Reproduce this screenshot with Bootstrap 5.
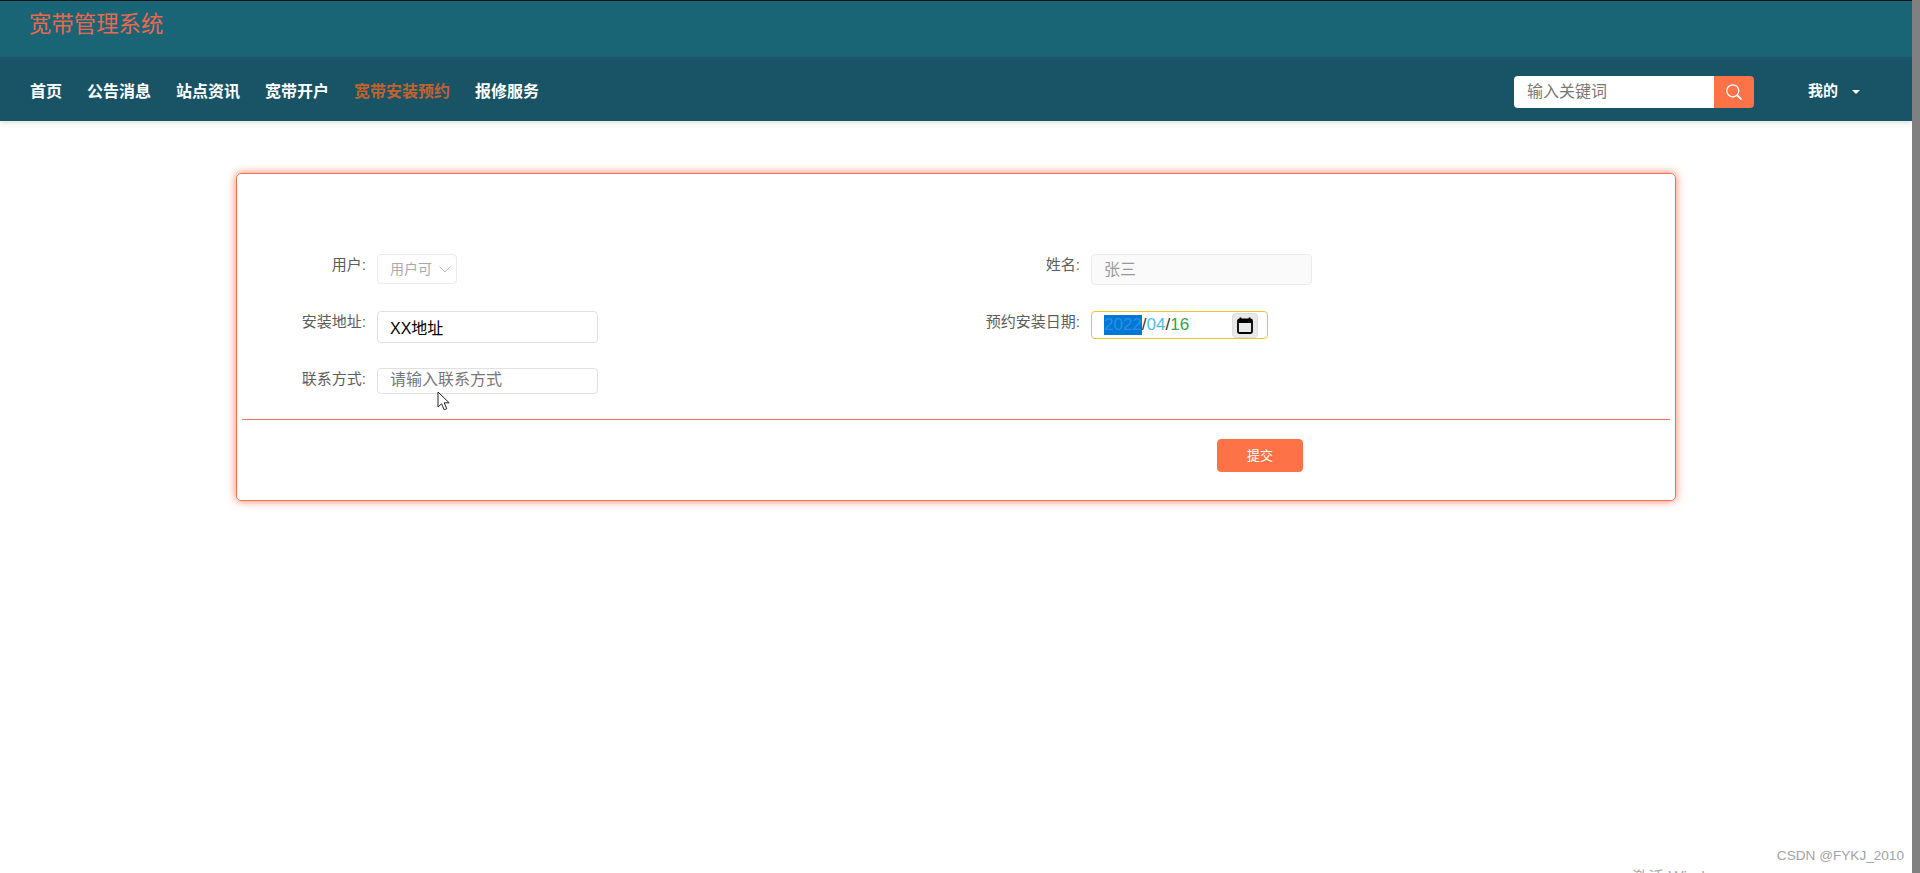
<!DOCTYPE html>
<html lang="zh-CN">
<head>
  <meta charset="UTF-8">
  <meta name="viewport" content="width=device-width, initial-scale=1.0">
  <link href="https://cdn.jsdelivr.net/npm/bootstrap@5.3.2/dist/css/bootstrap.min.css" rel="stylesheet">
  <title>宽带管理系统</title>
  <style>
    html, body { height: 100%; overflow: hidden; }
    body { font-family: "Liberation Sans", "Noto Sans CJK SC", sans-serif; font-size: 14px; color: #333; background: #fff; }
    .page-wrap { height: 873px; }
    .fake-scroll { width: 8px; background: #808080; }
    .top-bar { height: 57px; background: #196475; border-top: 1px solid #111; padding-left: 29px; }
    .brand-name { color: #e9694f; font-size: 22.4px; line-height: 47px; }
    .main-nav { height: 64px; background: #185465; padding: 5px 0 0 30px; box-shadow: 0 2px 4px rgba(0,0,0,.12); }
    .main-nav .nav-link { color: #fff; font-size: 16px; font-weight: 700; padding: 0; line-height: 24px; margin-right: 25px; }
    .main-nav .nav-link.active { color: #c2622f; }
    .search-box { width: 240px; height: 32px; margin-right: 54px; }
    .search-box input { width: 200px; height: 32px; border: 0; border-radius: 4px 0 0 4px; font-size: 16px; padding: 0 13px; }
    .search-box input::placeholder { color: #777; }
    .search-btn { width: 40px; height: 32px; background: #fd7246; border: 0; border-radius: 0 4px 4px 0; padding: 0; }
    .my-menu { color: #fff; font-size: 15px; font-weight: 700; width: 52px; margin-right: 52px; }
    .my-caret { border: 4px solid transparent; border-top: 4px solid #fff; border-bottom: 0; }
    .form-card { width: 1440px; height: 328px; margin: 52px 0 0 236px; padding: 0 5px; border: 1px solid #e9745a; border-radius: 5px; box-shadow: 0 0 9px rgba(253,100,60,.85); }
    .form-rows { padding-top: 80px; height: 245px; margin-bottom: 0; }
    .field-line { display: flex; align-items: flex-start; margin-bottom: 26px; }
    .field-line.first-left { margin-bottom: 27px; }
    .field-line.second-left { margin-bottom: 25px; }
    .field-label { width: 124px; text-align: right; font-size: 15px; line-height: 22px; color: #5c5c5c; margin-right: 11px; flex: none; }
    .form-control.pick-input, .form-select.pick-input { font-size: 16px; border-color: #e0e0e0; border-radius: 4px; padding: 0 12px; box-shadow: none; }
    .user-select.form-select.pick-input { width: 80px; height: 30px; font-size: 14px; padding: 0 22px 0 12px; background-color: #fff; color: #aaa; border-color: #eaeaea; background-size: 16px 16px; background-position: right 3px center; background-image: url("data:image/svg+xml,%3csvg xmlns='http://www.w3.org/2000/svg' viewBox='0 0 16 16'%3e%3cpath fill='none' stroke='%23bbb' d='M2.5 5.5l5.5 5.5 5.5-5.5'/%3e%3c/svg%3e"); }
    .name-input.form-control.pick-input { width: 221px; height: 31px; padding-bottom: 3px; }
    .name-input.form-control:disabled { background: #fafafa; color: #999; opacity: 1; border-color: #eaeaea; }
    .addr-input { width: 221px; height: 32px; color: #000; }
    .phone-input.form-control.pick-input { width: 221px; height: 26px; padding-bottom: 2px; }
    .phone-input::placeholder { color: #777; }
    .date-box { width: 177px; height: 28px; border: 1px solid #eec12f; border-radius: 4px; padding-left: 12px; font-size: 17px; line-height: 20px; }
    .date-year { background: #0078d7; color: #2e8fe0; }
    .date-month { color: #4bbfe8; }
    .date-day { color: #2eaa3f; }
    .cal-btn { width: 26px; height: 25px; background: #e9e9e9; border: 1px solid #ddd; border-radius: 4px; margin: 0 9px 0 auto; }
    .card-rule { height: 1px; background: #e9745a; }
    .submit-btn.btn { width: 86px; height: 33px; margin: 19px 0 0 975px; padding: 0; font-size: 13px; color: #fff; background: #fd7246; border: 1px solid #fd7246; border-radius: 4px; }
    .mouse-pointer { position: absolute; left: 437px; top: 391px; }
    .water-mark { position: absolute; right: 16px; top: 847px; color: #a3a3a3; font-size: 13.6px; line-height: 18px; }
    .activate-text { position: absolute; left: 1632px; top: 868px; color: #aaa; font-size: 16px; line-height: 20px; }
  </style>
</head>
<body class="position-relative">
  <div class="page-wrap d-flex">
    <div class="flex-grow-1">
      <div class="top-bar"><span class="brand-name">宽带管理系统</span></div>
      <nav class="main-nav d-flex align-items-center">
        <div class="nav flex-grow-1">
          <a class="nav-link" href="#">首页</a>
          <a class="nav-link" href="#">公告消息</a>
          <a class="nav-link" href="#">站点资讯</a>
          <a class="nav-link" href="#">宽带开户</a>
          <a class="nav-link active" href="#">宽带安装预约</a>
          <a class="nav-link" href="#">报修服务</a>
        </div>
        <div class="search-box d-flex">
          <input type="text" placeholder="输入关键词">
          <button class="search-btn d-flex align-items-center justify-content-center" type="button" aria-label="搜索">
            <svg width="18" height="18" viewBox="0 0 18 18" fill="none" stroke="#fff" stroke-width="1.3"><circle cx="7.8" cy="7.8" r="6"/><path d="M12.2 12.2l4.4 4.4" stroke-width="2"/></svg>
          </button>
        </div>
        <div class="my-menu d-flex align-items-center justify-content-between">
          <span>我的</span><span class="my-caret"></span>
        </div>
      </nav>

      <div class="form-card">
        <form>
          <div class="form-rows row g-0">
            <div class="col-6">
              <div class="field-line first-left">
                <label class="field-label">用户:</label>
                <select class="form-select pick-input user-select" disabled><option>用户可</option></select>
              </div>
              <div class="field-line second-left">
                <label class="field-label">安装地址:</label>
                <input class="form-control pick-input addr-input" type="text" value="XX地址">
              </div>
              <div class="field-line">
                <label class="field-label">联系方式:</label>
                <input class="form-control pick-input phone-input" type="text" placeholder="请输入联系方式">
              </div>
            </div>
            <div class="col-6">
              <div class="field-line">
                <label class="field-label">姓名:</label>
                <input class="form-control pick-input name-input" type="text" value="张三" disabled>
              </div>
              <div class="field-line">
                <label class="field-label">预约安装日期:</label>
                <div class="date-box d-flex align-items-center">
                  <span class="date-year">2022</span><span>/</span><span class="date-month">04</span><span>/</span><span class="date-day">16</span>
                  <span class="cal-btn d-flex align-items-center justify-content-center">
                    <svg width="16" height="17" viewBox="0 0 16 17"><path d="M3.5 0.5v3M12.5 0.5v3" stroke="#000" stroke-width="1.8"/><rect x="1" y="2.5" width="14" height="13.5" rx="1.5" fill="none" stroke="#000" stroke-width="1.8"/><path d="M1 3h14v3H1z" fill="#000"/></svg>
                  </span>
                </div>
              </div>
            </div>
          </div>
          <div class="card-rule"></div>
          <button class="submit-btn btn" type="button">提交</button>
        </form>
      </div>
    </div>
    <div class="fake-scroll"></div>
  </div>

  <svg class="mouse-pointer" width="14" height="20" viewBox="0 0 14 20"><path d="M1 1v15l3.6-3.2 2.6 6 2.6-1.1-2.6-5.9h5z" fill="#fff" stroke="#222" stroke-width="1"/></svg>
  <div class="activate-text">激活 Windows</div>
  <div class="water-mark">CSDN @FYKJ_2010</div>
</body>
</html>
